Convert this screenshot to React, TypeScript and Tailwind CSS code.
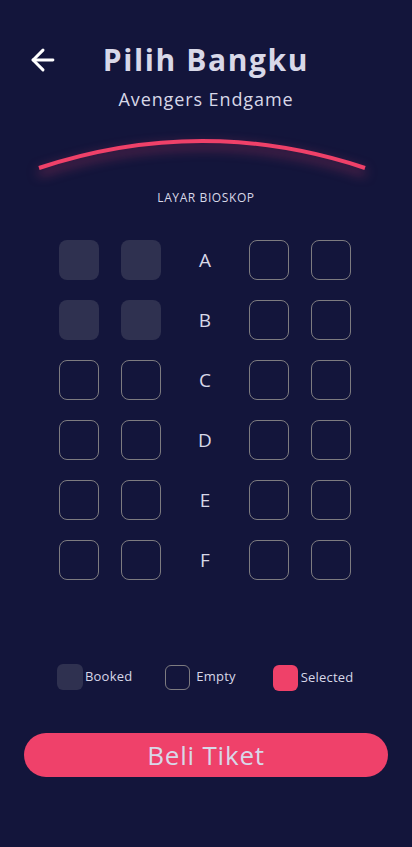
import { ArrowLeft } from "lucide-react";

const rows = ["A", "B", "C", "D", "E", "F"];
const booked = ["A1", "A2", "B1", "B2"];

const Seat = ({ id }: { id: string }) => {
  const isBooked = booked.includes(id);
  return isBooked ? (
    <div className="w-10 h-10 rounded-lg bg-[#2f3150]" />
  ) : (
    <div className="w-10 h-10 rounded-lg border border-[#7d7b80]" />
  );
};

const App = () => {
  return (
    <div
      className="w-[412px] h-[847px] bg-[#13153b] flex flex-col text-[#d8d8e8]"
      style={{ fontFamily: "'Open Sans', 'Liberation Sans', sans-serif" }}
    >
      <div className="grid grid-cols-[1fr_auto_1fr] items-center px-[26px] pt-[41px]">
        <ArrowLeft className="w-[34px] h-[34px] text-white" strokeWidth={2.1} />
        <h1 className="text-[30px] font-bold tracking-[1.6px] leading-[38px]">Pilih Bangku</h1>
        <div />
      </div>
      <p className="text-center text-[18px] leading-6 mt-[8px] tracking-[0.9px]">Avengers Endgame</p>

      <div className="flex justify-center mt-[19px]">
        <svg
          width="340"
          height="46"
          viewBox="0 0 340 46"
          className="drop-shadow-[0_5px_6px_rgba(239,65,105,0.55)]"
        >
          <path
            d="M 3 38 Q 166 -16 329 38"
            fill="none"
            stroke="#ef4169"
            strokeWidth="4"
          />
        </svg>
      </div>
      <p className="text-center text-[12px] leading-4 mt-[14px] tracking-[0.6px]">LAYAR BIOSKOP</p>

      <div className="flex flex-col gap-5 mt-[34px] pl-[59px]">
        {rows.map((r) => (
          <div key={r} className="flex items-center">
            <Seat id={r + "1"} />
            <div className="ml-[22px]">
              <Seat id={r + "2"} />
            </div>
            <div className="w-[88px] text-center text-[19px]">{r}</div>
            <Seat id={r + "3"} />
            <div className="ml-[22px]">
              <Seat id={r + "4"} />
            </div>
          </div>
        ))}
      </div>

      <div className="flex items-center mt-[83px] pl-[57px] text-[13px] tracking-[0.2px]">
        <div className="w-[26px] h-[26px] rounded-md bg-[#2f3150]" />
        <span className="ml-[2px]">Booked</span>
        <div className="w-[25px] h-[25px] rounded-md border border-[#7d7b80] ml-[33px]" />
        <span className="ml-[6px]">Empty</span>
        <div className="w-[25px] h-[26px] rounded-md bg-[#ef4169] ml-[37px] mt-[2px]" />
        <span className="ml-[3px] mt-[2px]">Selected</span>
      </div>

      <div className="mx-[24px] mt-[42px] h-[44px] rounded-full bg-[#ef416a] flex items-center justify-center text-[26px] tracking-[0.8px]">
        Beli Tiket
      </div>
    </div>
  );
};

export default App;
